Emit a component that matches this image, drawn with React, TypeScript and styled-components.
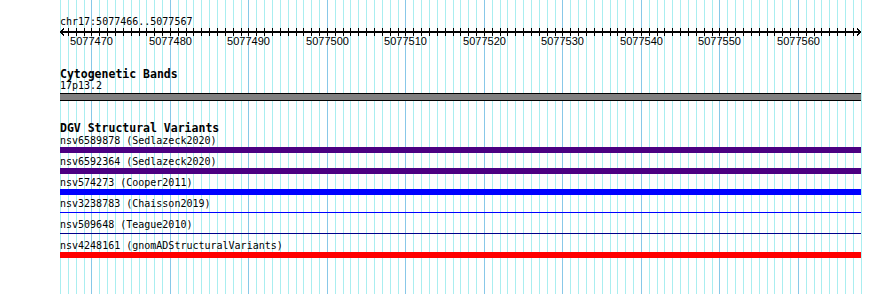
import styled, { createGlobalStyle } from "styled-components";

const START = 5077466;
const END = 5077567;
const LEFT = 60;
const PX_PER_BP = 7.85;
const SPAN = 801;

const bases = Array.from({ length: END - START + 2 }, (_, i) => i);
const xOf = (i: number) => Math.round(LEFT + i * PX_PER_BP);

const GlobalStyle = createGlobalStyle`
  html, body {
    margin: 0;
    padding: 0;
    background: #fff;
  }
  body {
    font-family: "DejaVu Sans Mono", monospace;
    color: #000;
  }
`;

const Browser = styled.div`
  position: relative;
  width: 890px;
  height: 294px;
  overflow: hidden;
  background: #fff;
`;

const GridLayer = styled.svg`
  position: absolute;
  top: 0;
  left: 0;
`;

const Tracks = styled.div`
  position: relative;
  display: flex;
  flex-direction: column;
  width: ${SPAN}px;
  padding: 15px 0 0 ${LEFT}px;
`;

const Locus = styled.div`
  font-size: 10px;
  line-height: 13px;
  height: 13px;
  white-space: pre;
`;

const Scale = styled.svg`
  display: block;
`;

const TickLabels = styled.div`
  position: relative;
  height: 12px;
  margin-top: -1px;
`;

const TickLabel = styled.span`
  position: absolute;
  top: 0;
  transform: translateX(-50%);
  font-family: "Liberation Sans", Arial, sans-serif;
  font-size: 11px;
  line-height: 12px;
`;

const Track = styled.section<{ $gap: number }>`
  display: flex;
  flex-direction: column;
  margin-top: ${(p) => p.$gap}px;
`;

const TrackTitle = styled.h3`
  margin: 0;
  font-size: 11.5px;
  font-weight: bold;
  line-height: 11px;
  height: 11px;
  white-space: pre;
`;

const BandName = styled.div`
  font-size: 10px;
  line-height: 11px;
  height: 11px;
`;

const Band = styled.div`
  box-sizing: border-box;
  height: 8px;
  margin-top: 2px;
  background: #808080;
  border-top: 1px solid #000;
  border-bottom: 1px solid #000;
`;

const FeatureRow = styled.div`
  display: flex;
  flex-direction: column;
  height: 21px;
`;

const FeatureName = styled.div`
  font-size: 10px;
  line-height: 13px;
  height: 13px;
  white-space: pre;
`;

const FeatureBar = styled.div<{ $color: string; $thin?: boolean }>`
  height: 6px;
  background: ${(p) =>
    p.$thin
      ? `linear-gradient(${p.$color}, ${p.$color}) 0 2px / 100% 1px no-repeat`
      : p.$color};
`;

const variants = [
  { name: "nsv6589878 (Sedlazeck2020)", color: "#4b0082" },
  { name: "nsv6592364 (Sedlazeck2020)", color: "#4b0082" },
  { name: "nsv574273 (Cooper2011)", color: "#0000ff" },
  { name: "nsv3238783 (Chaisson2019)", color: "#0000ff", thin: true },
  { name: "nsv509648 (Teague2010)", color: "#00008b", thin: true },
  { name: "nsv4248161 (gnomADStructuralVariants)", color: "#ff0000" },
];

const majors = bases.filter((i) => (START + i) % 10 === 0);

export default function App() {
  return (
    <>
      <GlobalStyle />
      <Browser>
        <GridLayer width={890} height={294} shapeRendering="crispEdges">
          {bases.map((i) => (
            <rect
              key={i}
              x={xOf(i)}
              y={0}
              width={1}
              height={294}
              fill={(START + i) % 10 === 0 ? "#88c8e8" : "#aaeef0"}
            />
          ))}
        </GridLayer>
        <Tracks>
          <Locus>chr17:5077466..5077567</Locus>
          <Scale width={SPAN + 1} height={8} shapeRendering="crispEdges">
            <rect x={0} y={3} width={SPAN} height={2} fill="#000" />
            {bases.slice(1, -1).map((i) => (
              <rect key={i} x={xOf(i) - LEFT} y={0} width={1} height={8} fill="#000" />
            ))}
            <polyline points="4,0.5 0.5,4 4,7.5" fill="none" stroke="#000" />
            <polyline
              points={`${SPAN - 4},0.5 ${SPAN - 0.5},4 ${SPAN - 4},7.5`}
              fill="none"
              stroke="#000"
            />
          </Scale>
          <TickLabels>
            {majors.map((i) => (
              <TickLabel key={i} style={{ left: xOf(i) - LEFT + 0.5 }}>
                {START + i}
              </TickLabel>
            ))}
          </TickLabels>

          <Track $gap={22}>
            <TrackTitle>Cytogenetic Bands</TrackTitle>
            <BandName>17p13.2</BandName>
            <Band />
          </Track>

          <Track $gap={22}>
            <TrackTitle>DGV Structural Variants</TrackTitle>
            {variants.map((v) => (
              <FeatureRow key={v.name}>
                <FeatureName>{v.name}</FeatureName>
                <FeatureBar $color={v.color} $thin={v.thin} />
              </FeatureRow>
            ))}
          </Track>
        </Tracks>
      </Browser>
    </>
  );
}
